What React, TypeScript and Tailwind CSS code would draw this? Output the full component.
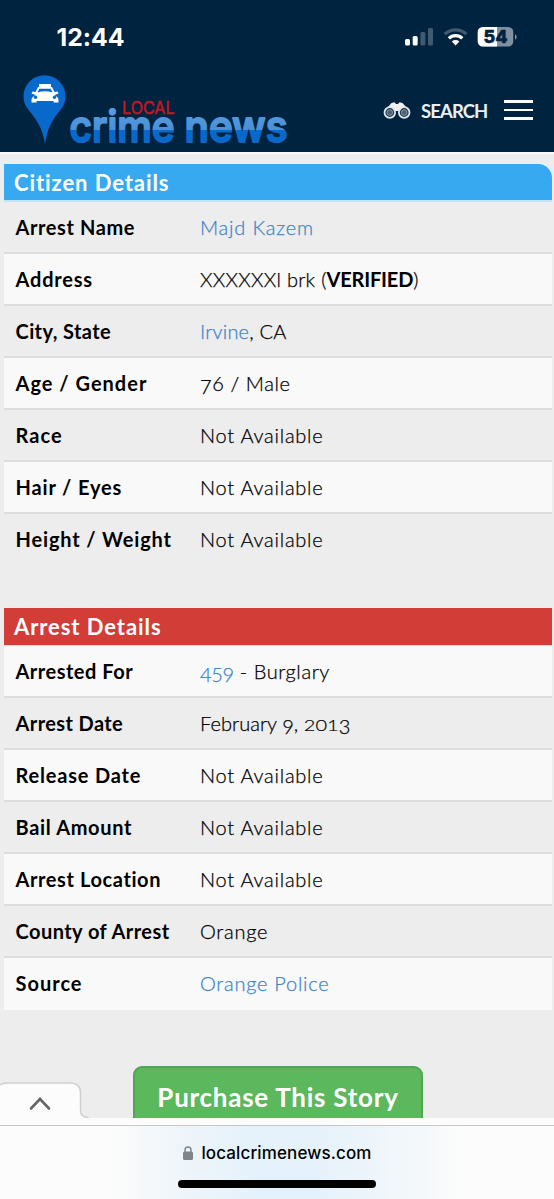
import React from "react";

type Row = { label: string; track: string; value: React.ReactNode; vtrack?: string };

function Figures({ text }: { text: string }) {
  return (
    <>
      {text.split("").map((c, i) =>
        "012".includes(c) ? (
          <span key={i} className="inline-block scale-y-[0.74] origin-[50%_77%]">{c}</span>
        ) : "34579".includes(c) ? (
          <span key={i} className="align-[-2.5px] leading-none">{c}</span>
        ) : (
          <span key={i}>{c}</span>
        ),
      )}
    </>
  );
}

function Link({ children }: { children: React.ReactNode }) {
  return <a className="text-[#3f83c8]">{children}</a>;
}

const NA = "Not Available";

const citizen: Row[] = [
  { label: "Arrest Name", track: "tracking-[0.6px]", value: <Link>Majd Kazem</Link>, vtrack: "tracking-[0.8px]" },
  {
    label: "Address",
    track: "tracking-[0.8px]",
    value: <>XXXXXXl brk (<b className="font-bold tracking-[-0.2px] [-webkit-text-stroke:0px]">VERIFIED</b>)</>,
    vtrack: "tracking-[0.3px]",
  },
  { label: "City, State", track: "tracking-[0.4px]", value: <><Link>Irvine</Link>, CA</>, vtrack: "tracking-[0.2px]" },
  { label: "Age / Gender", track: "tracking-[1px]", value: <><Figures text="76" /> / Male</>, vtrack: "tracking-[0.6px]" },
  { label: "Race", track: "tracking-[1.1px]", value: NA },
  { label: "Hair / Eyes", track: "tracking-[0.85px]", value: NA },
  { label: "Height / Weight", track: "tracking-[0.85px]", value: NA },
];

const arrest: Row[] = [
  {
    label: "Arrested For",
    track: "tracking-[0.5px]",
    value: <><Link><span className="tracking-[-0.4px]"><Figures text="459" /></span></Link> - Burglary</>,
    vtrack: "tracking-[0.6px]",
  },
  { label: "Arrest Date", track: "tracking-[0.4px]", value: <>February <Figures text="9" />, <Figures text="2013" /></>, vtrack: "tracking-[0.05px]" },
  { label: "Release Date", track: "tracking-[0.8px]", value: NA },
  { label: "Bail Amount", track: "tracking-[0.65px]", value: NA },
  { label: "Arrest Location", track: "tracking-[0.6px]", value: NA },
  { label: "County of Arrest", track: "tracking-[0.45px]", value: "Orange" },
  { label: "Source", track: "tracking-[1px]", value: <Link>Orange Police</Link> },
];

function Rows({ rows, lightFirst }: { rows: Row[]; lightFirst: boolean }) {
  return (
    <dl>
      {rows.map((r, i) => (
        <div
          key={r.label}
          className={`flex h-[52px] items-center whitespace-nowrap pl-[11.5px] text-[20px] text-black ${
            (i % 2 === 0) === lightFirst ? "bg-[#f9f9f9]" : "bg-[#ededed]"
          } ${i < rows.length - 1 ? "border-b-2 border-[#dddddd]" : "pb-[2px]"}`}
        >
          <dt className={`w-[184.5px] font-bold ${r.track}`}>{r.label}</dt>
          <dd className={`font-light [-webkit-text-stroke:0.25px_currentColor] ${r.vtrack ?? "tracking-[0.75px]"}`}>{r.value}</dd>
        </div>
      ))}
    </dl>
  );
}

function StatusIcons() {
  return (
    <svg width="114" height="22" viewBox="0 0 114 22" className="mt-[1px]">
      <g fill="#fff">
        <rect x="0" y="13" width="5" height="6.5" rx="1.5" />
        <rect x="7.7" y="10" width="5" height="9.5" rx="1.5" />
        <rect x="15.4" y="6" width="5" height="13.5" rx="1.5" opacity=".25" />
        <rect x="23" y="2" width="5" height="17.5" rx="1.5" opacity=".25" />
      </g>
      <g fill="none" stroke="#fff" strokeWidth="3.2">
        <path d="M39.8 8.2a15.5 15.5 0 0 1 21.6 0" opacity=".25" />
        <path d="M43.9 12.4a9.6 9.6 0 0 1 13.4 0" />
      </g>
      <path d="M46.8 15.4a5.6 5.6 0 0 1 7.6 0L50.6 19.5z" fill="#fff" />
      <clipPath id="batt"><rect x="72.5" y="1" width="36" height="19.6" rx="5.5" /></clipPath>
      <g clipPath="url(#batt)">
        <rect x="72.5" y="1" width="36" height="20" fill="#7f909f" />
        <rect x="72.5" y="1" width="19.5" height="20" fill="#fff" />
      </g>
      <path d="M110 8.2q1.8 1 1.8 2.8T110 13.8z" fill="#7f909f" />
      <text x="90.5" y="17.2" textAnchor="middle" fontSize="18" fontWeight="800" fill="#00233f" stroke="#00233f" strokeWidth=".5" className="font-['Inter',sans-serif]" textLength="24" lengthAdjust="spacingAndGlyphs">54</text>
    </svg>
  );
}

function Logo() {
  return (
    <svg width="270" height="76" viewBox="20 72 270 76" className="overflow-visible">
      <defs>
        <linearGradient id="tone" gradientUnits="userSpaceOnUse" x1="0" y1="106" x2="0" y2="144">
          <stop offset="0" stopColor="#5a9fe0" />
          <stop offset=".62" stopColor="#4a90d8" />
          <stop offset=".63" stopColor="#0869cb" />
          <stop offset="1" stopColor="#0869cb" />
        </linearGradient>
      </defs>
      <path d="M45 144.500C43 128 36 119 29 110.500A21 21 0 1 1 60 110.500C53 119 47 128 45 144.500Z" fill="#0869cb" />
      <g fill="#fff">
        <path d="M39 84h12v3H39z" />
        <path d="M35.500 95l-4-1.500 1-2 3 .6 2.500-5.100h14l2.500 5.100 3-.6 1 2-4 1.500c2.500 1.500 4 3 4 5v2.500h-5V101h-17v1.500h-5V100c0-2 1.500-3.500 4-5z" />
      </g>
      <path d="M37.500 92.500l1.800-3.700h11.400l1.800 3.700q-7.500-2.600-15 0z" fill="#0869cb" />
      <g fill="#0869cb"><circle cx="35.500" cy="97.300" r="1.700" /><circle cx="54.500" cy="97.300" r="1.700" /></g>
      <text x="122" y="113.500" fontSize="17" fill="#c31822" stroke="#c31822" strokeWidth=".5" textLength="52.500" lengthAdjust="spacingAndGlyphs" className="font-['Inter',sans-serif]">LOCAL</text>
      <g fontSize="43.500" fontWeight="500" fill="url(#tone)" stroke="url(#tone)" strokeWidth="2.200" strokeLinejoin="round" className="font-['Inter',sans-serif]">
        <text x="69.500" y="141.500" textLength="105" lengthAdjust="spacingAndGlyphs">crime</text>
        <text x="184.500" y="141.500" textLength="103" lengthAdjust="spacingAndGlyphs">news</text>
      </g>
    </svg>
  );
}

function Binoculars() {
  return (
    <svg width="28" height="17" viewBox="0 0 28 17">
      <path d="M5 5L8.500 1l3-.7 1.500 1.700h2L16.500.3l3 .7L23 5l3 4H2z" fill="#eef2f5" />
      <g fill="#1d3850" stroke="#dfe5ea" strokeWidth="1.800">
        <circle cx="6.800" cy="10.500" r="5.300" /><circle cx="21.200" cy="10.500" r="5.300" />
      </g>
      <g fill="#4b6173" stroke="#8c9ba8" strokeWidth="1">
        <circle cx="6.800" cy="10.500" r="2.800" /><circle cx="21.200" cy="10.500" r="2.800" />
      </g>
    </svg>
  );
}

export default function App() {
  return (
    <div className="flex h-[1199px] w-[554px] flex-col overflow-hidden bg-[#ededed] font-['Lato',sans-serif] [font-variant-ligatures:none]">
      <header className="h-[152px] shrink-0 bg-[#00233f]">
        <div className="flex h-[72px] items-start justify-between pl-[56.5px] pr-[35px] pt-[25px]">
          <span className="font-['Inter',sans-serif] text-[24.8px] font-bold leading-[24px] text-white">12:44</span>
          <StatusIcons />
        </div>
        <div className="flex items-start justify-between pl-5 pr-[21px]">
          <Logo />
          <div className="flex items-center pt-[25px]">
            <Binoculars />
            <span className="ml-[10px] mt-[2px] w-[66px] text-[18.5px] font-bold leading-6 tracking-[-0.9px] text-[#e9eef3]">SEARCH</span>
            <div className="ml-[17px] flex w-[29px] flex-col gap-[6px]">
              <i className="h-[2.5px] bg-white" />
              <i className="h-[2.5px] bg-white" />
              <i className="h-[2.5px] bg-white" />
            </div>
          </div>
        </div>
      </header>

      <main className="h-[966px] shrink-0 overflow-hidden border-t-2 border-[#f8f8f8] pl-1 pr-[2px] pt-[10px]">
        <h2 className="flex h-[38px] items-center rounded-tr-[14px] border-b-2 border-[#c5e3f8] bg-[#37a9f0] pl-[10px] text-[22px] font-bold tracking-[0.92px] text-white">Citizen Details</h2>
        <Rows rows={citizen} lightFirst={false} />
        <h2 className="mt-[42px] flex h-[38px] items-center border-b border-[#f3d3d1] bg-[#d23d38] pl-[10px] text-[22px] font-bold tracking-[0.92px] text-white">Arrest Details</h2>
        <Rows rows={arrest} lightFirst />
        <button className="ml-[129px] mt-[56px] flex h-[64px] w-[290px] justify-center rounded-[9px] border-2 border-[#52a652] bg-[#5cb85c] pt-[11px] text-[26px] font-bold leading-9 tracking-[0.74px] text-white">
          Purchase This Story
        </button>
      </main>

      <footer className="relative h-[81px] shrink-0 bg-[#fcfcfc]">
        <svg className="absolute left-0 top-[-39px]" width="100" height="40" viewBox="0 0 100 40">
          <path d="M0 6Q2 4 7 4H70Q80.500 4 80.500 14V31Q80.500 39 88.500 39V40H0Z" fill="#fcfcfc" />
          <path d="M0 6Q2 4 7 4H70Q80.500 4 80.500 14V31Q80.500 38.500 88.500 38.500" fill="none" stroke="#cfcfcf" strokeWidth="1.500" />
          <path d="M31 29.500l9-9.500 9 9.500" fill="none" stroke="#666" strokeWidth="2.600" strokeLinecap="round" />
        </svg>
        <div className="h-[8px] border-b border-[#c6c7c9]" />
        <div className="flex h-[73px] flex-col items-center bg-[linear-gradient(to_right,#fcfcfc_20%,#eef5fa_33%,#e6f2fb_44%,#e6f2fb_58%,#eef5fa_68%,#fcfcfc_84%)]">
          <div className="flex items-center justify-center gap-[8px] pl-[1px] pt-[15px]">
            <svg className="shrink-0" width="10" height="14" viewBox="0 0 10 14">
              <rect x="0" y="5.500" width="10" height="8.500" rx="1.500" fill="#7e848a" />
              <path d="M2 6V4a3 3 0 0 1 6 0v2" fill="none" stroke="#7e848a" strokeWidth="1.400" />
            </svg>
            <span className="font-['Inter',sans-serif] text-[17px] font-medium leading-6 tracking-[0.12px] text-black">localcrimenews.com</span>
          </div>
          <div className="mt-[15px] h-[8px] w-[198px] rounded-full bg-black" />
        </div>
      </footer>
    </div>
  );
}
